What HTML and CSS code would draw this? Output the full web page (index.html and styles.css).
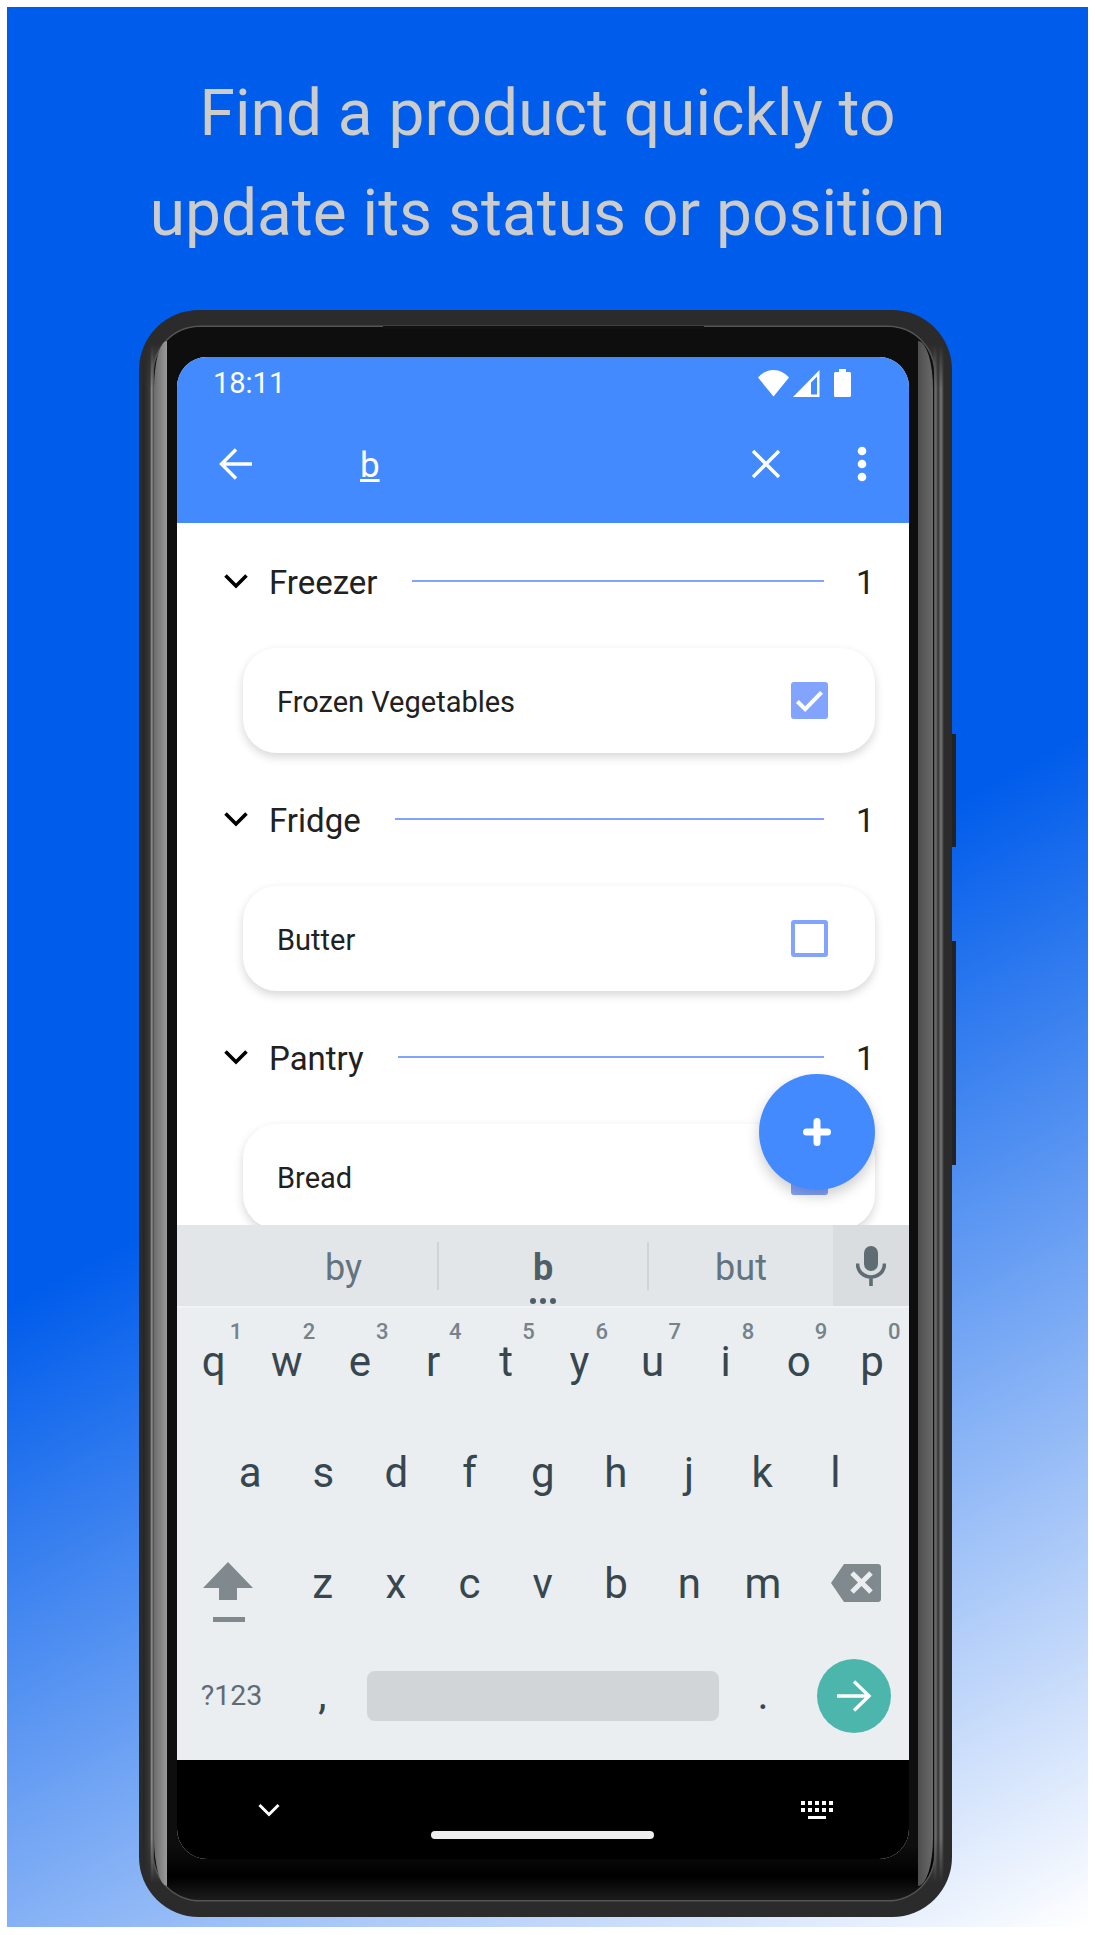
FILE: index.html
```html
<!DOCTYPE html>
<html lang="en">

<head>
    <meta charset="UTF-8">
    <title>Find a product quickly</title>

    <link rel="stylesheet" href="styles.css">
</head>

<body>
    <main class="poster">
        <h1 class="headline">Find a product quickly to<br>update its status or position</h1>

        <div class="phone">
            <span class="side-button volume"></span>
            <span class="side-button power"></span>
            <div class="phone-rim">
                <div class="phone-bezel">
                    <span class="speaker"></span>
                    <span class="gloss gloss-left"></span>
                    <span class="gloss gloss-right"></span>
                    <div class="screen">
                        <header class="appbar">
                            <div class="statusbar">
                                <span class="clock">18:11</span>
                                <div class="status-icons">
                                    <svg width="31" height="28" viewBox="0 0 31 28"><path d="M15.5 27.500L0 8.500C4 4 9.500 1 15.500 1S27 4 31 8.500Z" fill="#fff"/></svg>
                                    <svg width="27" height="27" viewBox="0 0 27 27"><path fill-rule="evenodd" d="M26.500 0V27H0ZM24 6.500L18 12.500V24.500H24Z" fill="#fff"/></svg>
                                    <svg width="17" height="28" viewBox="0 0 17 28"><path d="M5 0H12V3H15.500C16.300 3 17 3.700 17 4.500V26.500C17 27.300 16.300 28 15.500 28H1.500C.700 28 0 27.300 0 26.500V4.500C0 3.700 .700 3 1.500 3H5Z" fill="#fff"/></svg>
                                </div>
                            </div>
                            <div class="toolbar">
                                <svg class="back-icon" width="36" height="34" viewBox="0 0 36 34"><path d="M34 17H4M18 2.500L3.500 17L18 31.500" fill="none" stroke="#fff" stroke-width="3.400"/></svg>
                                <span class="query">b</span>
                                <svg class="clear-icon" width="30" height="30" viewBox="0 0 30 30"><path d="M2 2L28 28M28 2L2 28" fill="none" stroke="#fff" stroke-width="3.400"/></svg>
                                <svg class="more-icon" width="10" height="36" viewBox="0 0 10 36"><circle cx="5" cy="5" r="4.300" fill="#fff"/><circle cx="5" cy="18" r="4.300" fill="#fff"/><circle cx="5" cy="31" r="4.300" fill="#fff"/></svg>
                            </div>
                        </header>

                        <section class="list">
                            <div class="group">
                                <svg class="chevron" width="26" height="16" viewBox="0 0 26 16"><path d="M2.500 2.500L13 13L23.500 2.500" fill="none" stroke="#000" stroke-width="3.600"/></svg>
                                <span class="group-name">Freezer</span>
                                <span class="group-line"></span>
                                <span class="group-count">1</span>
                            </div>
                            <div class="card">
                                <span class="item-name">Frozen Vegetables</span>
                                <span class="checkbox checked">
                                    <svg width="30" height="24" viewBox="0 0 30 24"><path d="M2.500 12.500L10.500 20.500L27.500 3" fill="none" stroke="#fff" stroke-width="4.200"/></svg>
                                </span>
                            </div>

                            <div class="group">
                                <svg class="chevron" width="26" height="16" viewBox="0 0 26 16"><path d="M2.500 2.500L13 13L23.500 2.500" fill="none" stroke="#000" stroke-width="3.600"/></svg>
                                <span class="group-name">Fridge</span>
                                <span class="group-line"></span>
                                <span class="group-count">1</span>
                            </div>
                            <div class="card">
                                <span class="item-name">Butter</span>
                                <span class="checkbox"></span>
                            </div>

                            <div class="group">
                                <svg class="chevron" width="26" height="16" viewBox="0 0 26 16"><path d="M2.500 2.500L13 13L23.500 2.500" fill="none" stroke="#000" stroke-width="3.600"/></svg>
                                <span class="group-name">Pantry</span>
                                <span class="group-line"></span>
                                <span class="group-count">1</span>
                            </div>
                            <div class="card">
                                <span class="item-name">Bread</span>
                                <span class="checkbox checked"></span>
                            </div>
                        </section>

                        <button class="fab">
                            <svg width="28" height="28" viewBox="0 0 28 28"><path d="M14 3.500V24.500M3.500 14H24.500" fill="none" stroke="#fff" stroke-width="7" stroke-linecap="round"/></svg>
                        </button>

                        <section class="keyboard">
                            <div class="suggestions">
                                <span class="word">by</span>
                                <span class="word current">b</span>
                                <span class="word">but</span>
                                <span class="mic">
                                    <svg width="30" height="40" viewBox="0 0 30 40"><rect x="8" y="0" width="14" height="25" rx="7" fill="#5f6c74"/><path d="M1.500 17.500C1.500 26 8 31 15 31S28.500 26 28.500 17.500M15 30V40" fill="none" stroke="#5f6c74" stroke-width="3.600"/></svg>
                                </span>
                            </div>
                            <div class="keys">
                                <div class="key-row">
                                    <span class="key">q<sup>1</sup></span>
                                    <span class="key">w<sup>2</sup></span>
                                    <span class="key">e<sup>3</sup></span>
                                    <span class="key">r<sup>4</sup></span>
                                    <span class="key">t<sup>5</sup></span>
                                    <span class="key">y<sup>6</sup></span>
                                    <span class="key">u<sup>7</sup></span>
                                    <span class="key">i<sup>8</sup></span>
                                    <span class="key">o<sup>9</sup></span>
                                    <span class="key">p<sup>0</sup></span>
                                </div>
                                <div class="key-row home">
                                    <span class="key">a</span>
                                    <span class="key">s</span>
                                    <span class="key">d</span>
                                    <span class="key">f</span>
                                    <span class="key">g</span>
                                    <span class="key">h</span>
                                    <span class="key">j</span>
                                    <span class="key">k</span>
                                    <span class="key">l</span>
                                </div>
                                <div class="key-row bottom">
                                    <span class="key wide shift">
                                        <svg width="50" height="60" viewBox="0 0 50 60"><path d="M25 0L50 26H34V38H16V26H0Z" fill="#80898d"/><rect x="10" y="55" width="32" height="5" fill="#80898d"/></svg>
                                    </span>
                                    <span class="key">z</span>
                                    <span class="key">x</span>
                                    <span class="key">c</span>
                                    <span class="key">v</span>
                                    <span class="key">b</span>
                                    <span class="key">n</span>
                                    <span class="key">m</span>
                                    <span class="key wide erase">
                                        <svg width="50" height="38" viewBox="0 0 50 38"><path d="M13 0H47C48.700 0 50 1.300 50 3V35C50 36.700 48.700 38 47 38H13L0 19Z" fill="#80898d"/><path d="M21 9L40 28M40 9L21 28" fill="none" stroke="#eaeef1" stroke-width="5"/></svg>
                                    </span>
                                </div>
                                <div class="key-row actions">
                                    <span class="key symbols">?123</span>
                                    <span class="key">,</span>
                                    <span class="spacebar"></span>
                                    <span class="key">.</span>
                                    <span class="go">
                                        <svg width="36" height="34" viewBox="0 0 36 34"><path d="M1 17H33M18 2.500L33 17L18 31.500" fill="none" stroke="#fff" stroke-width="3.400"/></svg>
                                    </span>
                                </div>
                            </div>
                        </section>

                        <nav class="navbar">
                            <svg width="22" height="14" viewBox="0 0 22 14"><path d="M1.500 2L11 11.500L20.500 2" fill="none" stroke="#fff" stroke-width="3"/></svg>
                            <span class="home-bar"></span>
                            <svg width="32" height="18" viewBox="0 0 32 18"><path d="M0 0h4v4h-4zM7 0h4v4h-4zM14 0h4v4h-4zM21 0h4v4h-4zM28 0h4v4h-4zM0 7h4v4h-4zM7 7h4v4h-4zM14 7h4v4h-4zM21 7h4v4h-4zM28 7h4v4h-4zM7 15h18v3h-18z" fill="#fff"/></svg>
                        </nav>
                    </div>
                </div>
            </div>
        </div>
    </main>
</body>

</html>
```

FILE: styles.css
```css
html {
    background-color: #fff;
    font-family: Roboto, "Liberation Sans", sans-serif;
}

body {
    margin: 0;
}

.poster {
    display: flex;
    flex-direction: column;
    align-items: center;
    width: 1081px;
    height: 1920px;
    margin: 7px 7px 8px;
    background: linear-gradient(152deg, #005ceb 52%, #fff 100%);
}

.headline {
    margin: 57px 0 46px;
    font-size: 64px;
    font-weight: 400;
    line-height: 100px;
    text-align: center;
    color: #ccc;
}

/* phone body */
.phone {
    position: relative;
    width: 813px;
    height: 1607px;
    box-sizing: border-box;
    margin-right: 4px;
    padding: 4px;
    border-radius: 60px;
    background-color: #2b2b2b;
}

.side-button {
    position: absolute;
    right: -4px;
    width: 4px;
    background-color: #222;
}

.volume {
    top: 424px;
    height: 113px;
}

.power {
    top: 631px;
    height: 224px;
}

.phone-rim {
    height: 100%;
    box-sizing: border-box;
    padding: 13px 14px 13px 11px;
    border-radius: 56px;
    background:
        linear-gradient(180deg, #2b2b2b 30px, rgba(43, 43, 43, 0) 75px, rgba(43, 43, 43, 0) calc(100% - 75px), #2b2b2b calc(100% - 30px)),
        linear-gradient(90deg, #242424 0, #3a3a3a 7px, #a0a0a0 9px, #6b6b6b 11px, #555 790px, #8a8a8a 792px, #333 795px, #777 798px, #2b2b2b 801px);
}

.phone-bezel {
    position: relative;
    height: 100%;
    box-sizing: border-box;
    padding: 30px 25.500px 41px 23px;
    border-radius: 46px;
    background: linear-gradient(180deg, #0e0e0e 96.5%, #000 98.500%, #1c1c1c 100%);
    box-shadow: 0 0 0 1.500px #555;
}

.speaker {
    position: absolute;
    top: -1px;
    left: 229px;
    width: 321px;
    height: 3px;
    background-color: #111;
}

.gloss {
    position: absolute;
    top: 14px;
    bottom: 14px;
}

.gloss-left {
    left: 0;
    width: 13px;
    border-radius: 13px 0 0 13px / 48px 0 0 48px;
    background: linear-gradient(90deg, #6b6b6b, #9a9a9a);
}

.gloss-right {
    right: 1px;
    width: 15px;
    border-radius: 0 15px 15px 0 / 0 48px 48px 0;
    background: linear-gradient(90deg, #4e4e4e, #6a6a6a);
}

.screen {
    position: relative;
    display: flex;
    flex-direction: column;
    height: 100%;
    overflow: hidden;
    border-radius: 30px;
    background-color: #fff;
}

/* app bar */
.appbar {
    flex: none;
    height: 166px;
    background-color: #448aff;
    color: #fff;
}

.statusbar {
    display: flex;
    justify-content: space-between;
    align-items: center;
    height: 52px;
    padding: 0 58px 0 36px;
}

.clock {
    font-size: 29px;
}

.status-icons {
    display: flex;
    align-items: center;
    gap: 4px;
}

.status-icons svg:last-child {
    margin-left: 10px;
}

.toolbar {
    display: flex;
    align-items: center;
    height: 110px;
    padding-left: 41px;
}

.query {
    margin: 2px 0 0 106px;
    font-size: 35px;
    text-decoration: underline;
}

.clear-icon {
    margin-left: auto;
}

.more-icon {
    margin: 0 42px 0 76px;
}

/* list */
.list {
    flex: 1;
    min-height: 0;
    overflow: hidden;
    padding-top: 29px;
}

.group {
    display: flex;
    align-items: center;
    height: 58px;
    padding: 0 34px 0 46px;
    color: #212121;
}

.group-name {
    margin: 3px 0 0 20px;
    font-size: 33px;
}

.group-line {
    flex: 1;
    height: 2px;
    margin: 0 32px 0 34px;
    background-color: #82a4ff;
}

.group-count {
    margin-top: 3px;
    font-size: 33px;
}

.card {
    display: flex;
    justify-content: space-between;
    align-items: center;
    height: 105px;
    box-sizing: border-box;
    margin: 38px 34px 37px 66px;
    padding: 0 47px 0 34px;
    border-radius: 34px;
    background-color: #fff;
    box-shadow: 0 4px 10px rgba(0, 0, 0, .16);
    font-size: 29px;
    color: #212121;
}

.item-name {
    margin-top: 2px;
}

.checkbox {
    display: flex;
    justify-content: center;
    align-items: center;
    width: 37px;
    height: 37px;
    box-sizing: border-box;
    border: 4.5px solid #82a4ff;
    border-radius: 3px;
}

.checked {
    background-color: #82a4ff;
}

.fab {
    position: absolute;
    top: 717px;
    left: 582px;
    display: flex;
    justify-content: center;
    align-items: center;
    width: 116px;
    height: 116px;
    padding: 0;
    border: none;
    border-radius: 50%;
    background-color: #448aff;
    box-shadow: 0 6px 14px rgba(0, 0, 0, .2);
}

/* keyboard */
.keyboard {
    position: relative;
    flex: none;
    background-color: #eaeef1;
    color: #37474f;
}

.suggestions {
    display: grid;
    grid-template-columns: 262px 210px 184px 76px;
    align-items: center;
    height: 81px;
    border-bottom: 2px solid #f1f3f5;
    background-color: #e2e6e9;
    font-size: 36px;
    color: #64747e;
    box-sizing: content-box;
}

.word {
    height: 48px;
    line-height: 53px;
    text-align: center;
    border-right: 2px solid #d0d4d7;
}

.word:first-child {
    padding-left: 73px;
}

.current {
    position: relative;
    font-weight: 700;
    color: #4f5f69;
}

.current::after {
    content: "";
    position: absolute;
    left: 50%;
    bottom: -14px;
    width: 6px;
    height: 6px;
    margin-left: -3px;
    border-radius: 50%;
    background-color: #4f5f69;
    box-shadow: -10px 0 #4f5f69, 10px 0 #4f5f69;
}

.word:nth-child(3) {
    border-right: none;
}

.mic {
    display: flex;
    justify-content: center;
    align-items: center;
    height: 100%;
    background-color: #d9dde0;
}

.keys {
    height: 452px;
}

.key-row {
    display: grid;
    grid-template-columns: repeat(10, 1fr);
    height: 110.800px;
}

.home {
    padding: 0 36.500px;
    grid-template-columns: repeat(9, 1fr);
}

.bottom {
    grid-template-columns: 109px repeat(7, 1fr) 109px;
}

.actions {
    grid-template-columns: 109px 73px 1fr 73px 109px;
    align-items: center;
}

.key {
    position: relative;
    display: flex;
    justify-content: center;
    align-items: center;
    padding-bottom: 3px;
    font-size: 42px;
}

.key sup {
    position: absolute;
    top: 13px;
    right: 8px;
    font-size: 22px;
    font-weight: 500;
    line-height: 1;
    color: #76838b;
}

.shift {
    padding: 14px 7px 0 0;
}

.erase {
    padding: 0 0 3px 4px;
}

.symbols {
    padding-bottom: 0;
    font-size: 28.500px;
    color: #5f6c74;
}

.spacebar {
    height: 50px;
    margin: 0 7.500px;
    border-radius: 8px;
    background-color: #d1d5d8;
}

.go {
    display: flex;
    justify-content: center;
    align-items: center;
    width: 74px;
    height: 74px;
    margin-left: 17px;
    border-radius: 50%;
    background-color: #4db6ac;
}

.navbar {
    position: relative;
    display: flex;
    justify-content: space-between;
    align-items: center;
    flex: none;
    height: 99px;
    box-sizing: border-box;
    padding: 0 76px 0 81px;
    background-color: #000;
}

.home-bar {
    position: absolute;
    left: 254px;
    bottom: 20px;
    width: 223px;
    height: 8px;
    border-radius: 4px;
    background-color: #eee;
}
```
